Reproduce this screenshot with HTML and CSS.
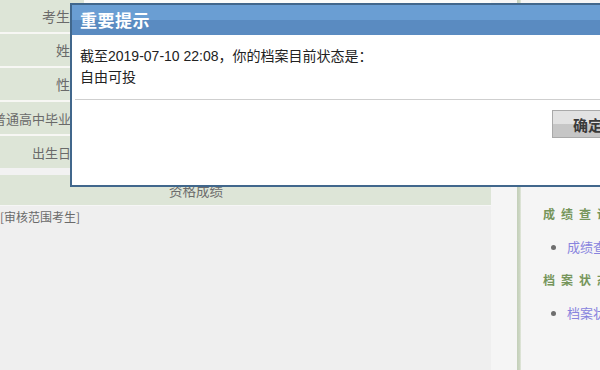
FILE: index.html
```html
<!DOCTYPE html>
<html lang="zh-CN">
<head>
<meta charset="utf-8">
<title>重要提示</title>
<link rel="stylesheet" href="styles.css">
</head>
<body>
<div class="page">
  <div class="main">
    <div class="rows">
      <div class="row"><div class="label">考生号</div><div class="value"></div></div>
      <div class="row"><div class="label">姓名</div><div class="value"></div></div>
      <div class="row"><div class="label">性别</div><div class="value"></div></div>
      <div class="row"><div class="label label--sm">普通高中毕业生</div><div class="value"></div></div>
      <div class="row"><div class="label label--sm">出生日期</div><div class="value"></div></div>
    </div>
    <div class="spacer"></div>
    <div class="section-row"><span class="section-title">资格成绩</span></div>
    <div class="note">[审核范围考生]</div>
  </div>
  <div class="gutter"></div>
  <div class="bar"></div>
  <div class="sidebar">
    <h3 class="side-head">成绩查询</h3>
    <ul class="side-list"><li><a class="side-link" href="#">成绩查询</a></li></ul>
    <h3 class="side-head">档案状态</h3>
    <ul class="side-list"><li><a class="side-link" href="#">档案状态</a></li></ul>
  </div>
</div>

<div class="dialog">
  <div class="dialog-title">重要提示</div>
  <div class="dialog-body">
    <p class="msg">截至2019-07-10 22:08，你的档案目前状态是：</p>
    <p class="msg">自由可投</p>
  </div>
  <div class="dialog-foot">
    <button class="btn" type="button">确定</button>
  </div>
</div>
</body>
</html>
```

FILE: styles.css
```css
html, body {
  margin: 0;
  padding: 0;
}
body {
  width: 600px;
  height: 370px;
  overflow: hidden;
  background: #f5f5f5;
  font-family: "Liberation Sans", "Noto Sans CJK SC", sans-serif;
  color: #333;
  position: relative;
}
.page {
  display: flex;
  height: 370px;
}
.main {
  width: 491px;
  flex: none;
  background: #efefef;
  display: flex;
  flex-direction: column;
}
.rows {
  display: flex;
  flex-direction: column;
  gap: 2px;
  background: #f7f7f4;
}
.row {
  display: flex;
  height: 32px;
}
.label {
  width: 84px;
  flex: none;
  background: #dde5d7;
  display: flex;
  justify-content: flex-end;
  align-items: center;
  white-space: nowrap;
  font-family: "Noto Sans CJK SC", sans-serif;
  font-size: 14px;
  color: #6a6a6a;
  overflow: hidden;
}
.label--sm {
  font-size: 13px;
}
.value {
  flex: 1;
  background: #fbfbf9;
}
.spacer {
  height: 7px;
  background: #f2f2f2;
}
.section-row {
  height: 30px;
  background: #dde5d7;
  display: flex;
  align-items: center;
  padding-left: 169px;
  border-bottom: 1px solid #f6f6f6;
}
.section-title {
  font-family: "Noto Sans CJK SC", sans-serif;
  font-size: 13.5px;
  color: #6c6c6c;
}
.note {
  padding-top: 3px;
  font-family: "Noto Sans CJK SC", sans-serif;
  font-size: 12px;
  line-height: 16px;
  color: #6a6a6a;
}
.gutter {
  width: 26px;
  flex: none;
  background: #f5f5f5;
}
.bar {
  width: 4px;
  flex: none;
  background: linear-gradient(to right, #c3cfb9, #cdd7c4 70%, #e6ebe1);
}
.sidebar {
  flex: 1;
  padding: 206px 0 0 22px;
  background: #f5f5f5;
}
.side-head {
  margin: 0;
  font-family: "Noto Sans CJK SC", sans-serif;
  font-size: 12px;
  line-height: 16px;
  font-weight: bold;
  letter-spacing: 6px;
  color: #76955b;
  white-space: nowrap;
}
.side-list {
  list-style: none;
  margin: 0;
  padding: 16px 0 16px 0;
}
.side-list li {
  position: relative;
  padding-left: 24px;
  font-family: "Noto Sans CJK SC", sans-serif;
  font-size: 13px;
  line-height: 18px;
  white-space: nowrap;
}
.side-list li::before {
  content: "";
  position: absolute;
  left: 8px;
  top: 7px;
  width: 5px;
  height: 5px;
  border-radius: 50%;
  background: #6e6e6e;
}
.side-link {
  color: #8884de;
  text-decoration: none;
}

/* dialog overlay */
.dialog {
  position: absolute;
  left: 70px;
  top: 3px;
  width: 560px;
  height: 180px;
  border: 2px solid #41678c;
  background: #fff;
  display: flex;
  flex-direction: column;
}
.dialog-title {
  height: 30px;
  flex: none;
  background: linear-gradient(#6a9ed3 0, #6a9ed3 50%, #5a8bc1 50%, #5a8bc1 100%);
  color: #fff;
  font-family: "Noto Sans CJK SC", sans-serif;
  font-weight: bold;
  font-size: 17px;
  line-height: 30px;
  padding-left: 8px;
  letter-spacing: 0.5px;
}
.dialog-body {
  padding: 11px 8px 0 5px;
  height: 53px;
  border-bottom: 1px solid #cfcfcf;
  margin-left: 3px;
}
.msg {
  margin: 0;
  font-size: 14px;
  line-height: 21px;
  color: #222;
}
.dialog-foot {
  padding: 10px 0 0 480px;
}
.btn {
  width: 80px;
  height: 28px;
  margin: 0;
  padding: 0 0 0 20px;
  text-align: left;
  border: 1px solid #a9a9a9;
  background: linear-gradient(#e2e2e2 0, #e2e2e2 48%, #c6c6c6 52%, #c6c6c6 100%);
  font-family: "Noto Sans CJK SC", sans-serif;
  font-weight: bold;
  font-size: 15px;
  color: #3a3a3a;
}
```
